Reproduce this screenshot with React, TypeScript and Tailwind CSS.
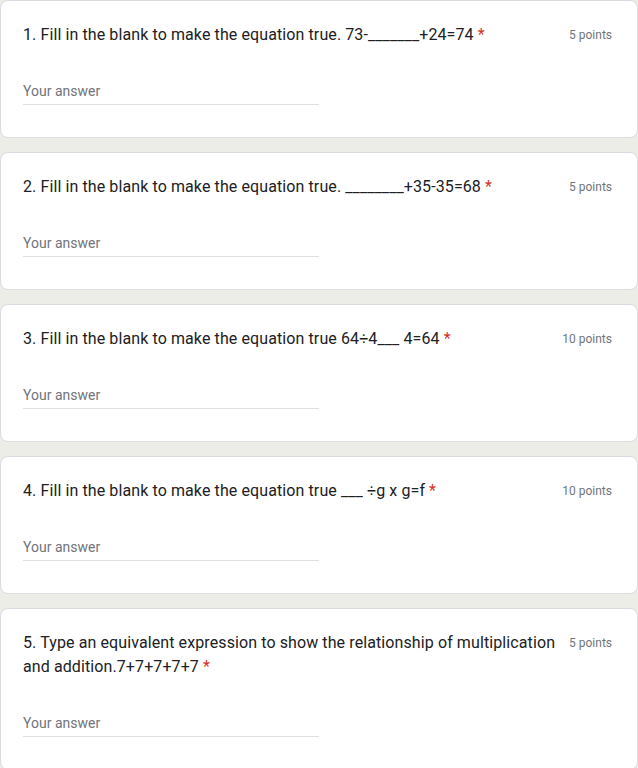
const questions = [
  { text: '1. Fill in the blank to make the equation true. 73-_______+24=74', points: '5 points' },
  { text: '2. Fill in the blank to make the equation true. ________+35-35=68', points: '5 points' },
  { text: '3. Fill in the blank to make the equation true 64÷4___ 4=64', points: '10 points' },
  { text: '4. Fill in the blank to make the equation true ___ ÷g x g=f', points: '10 points' },
  {
    text: '5. Type an equivalent expression to show the relationship of multiplication and addition.7+7+7+7+7',
    points: '5 points',
  },
];

function QuestionCard({ text, points }: { text: string; points: string }) {
  return (
    <div className="rounded-lg border border-[#dadce0] bg-white pb-[32px] pl-[22px] pr-[25px] pt-[22px]">
      <div className="flex items-start justify-between gap-2">
        <div className="text-[16px] leading-6 tracking-[0.1px] text-[#202124]">
          {text}
          <span className="ml-1 text-[#d93025]">*</span>
        </div>
        <div className="shrink-0 whitespace-nowrap text-[12px] leading-6 text-[#70757a]">{points}</div>
      </div>
      <div className="mt-[31px] w-[296px] border-b border-[#e0e0e0] text-[14px] leading-[26px] text-[#70757a]">
        Your answer
      </div>
    </div>
  );
}

export default function App() {
  return (
    <div className="flex min-h-screen flex-col gap-[14px] bg-[#ebede6] font-['Roboto',sans-serif]">
      {questions.map((q) => (
        <QuestionCard key={q.text} {...q} />
      ))}
    </div>
  );
}
